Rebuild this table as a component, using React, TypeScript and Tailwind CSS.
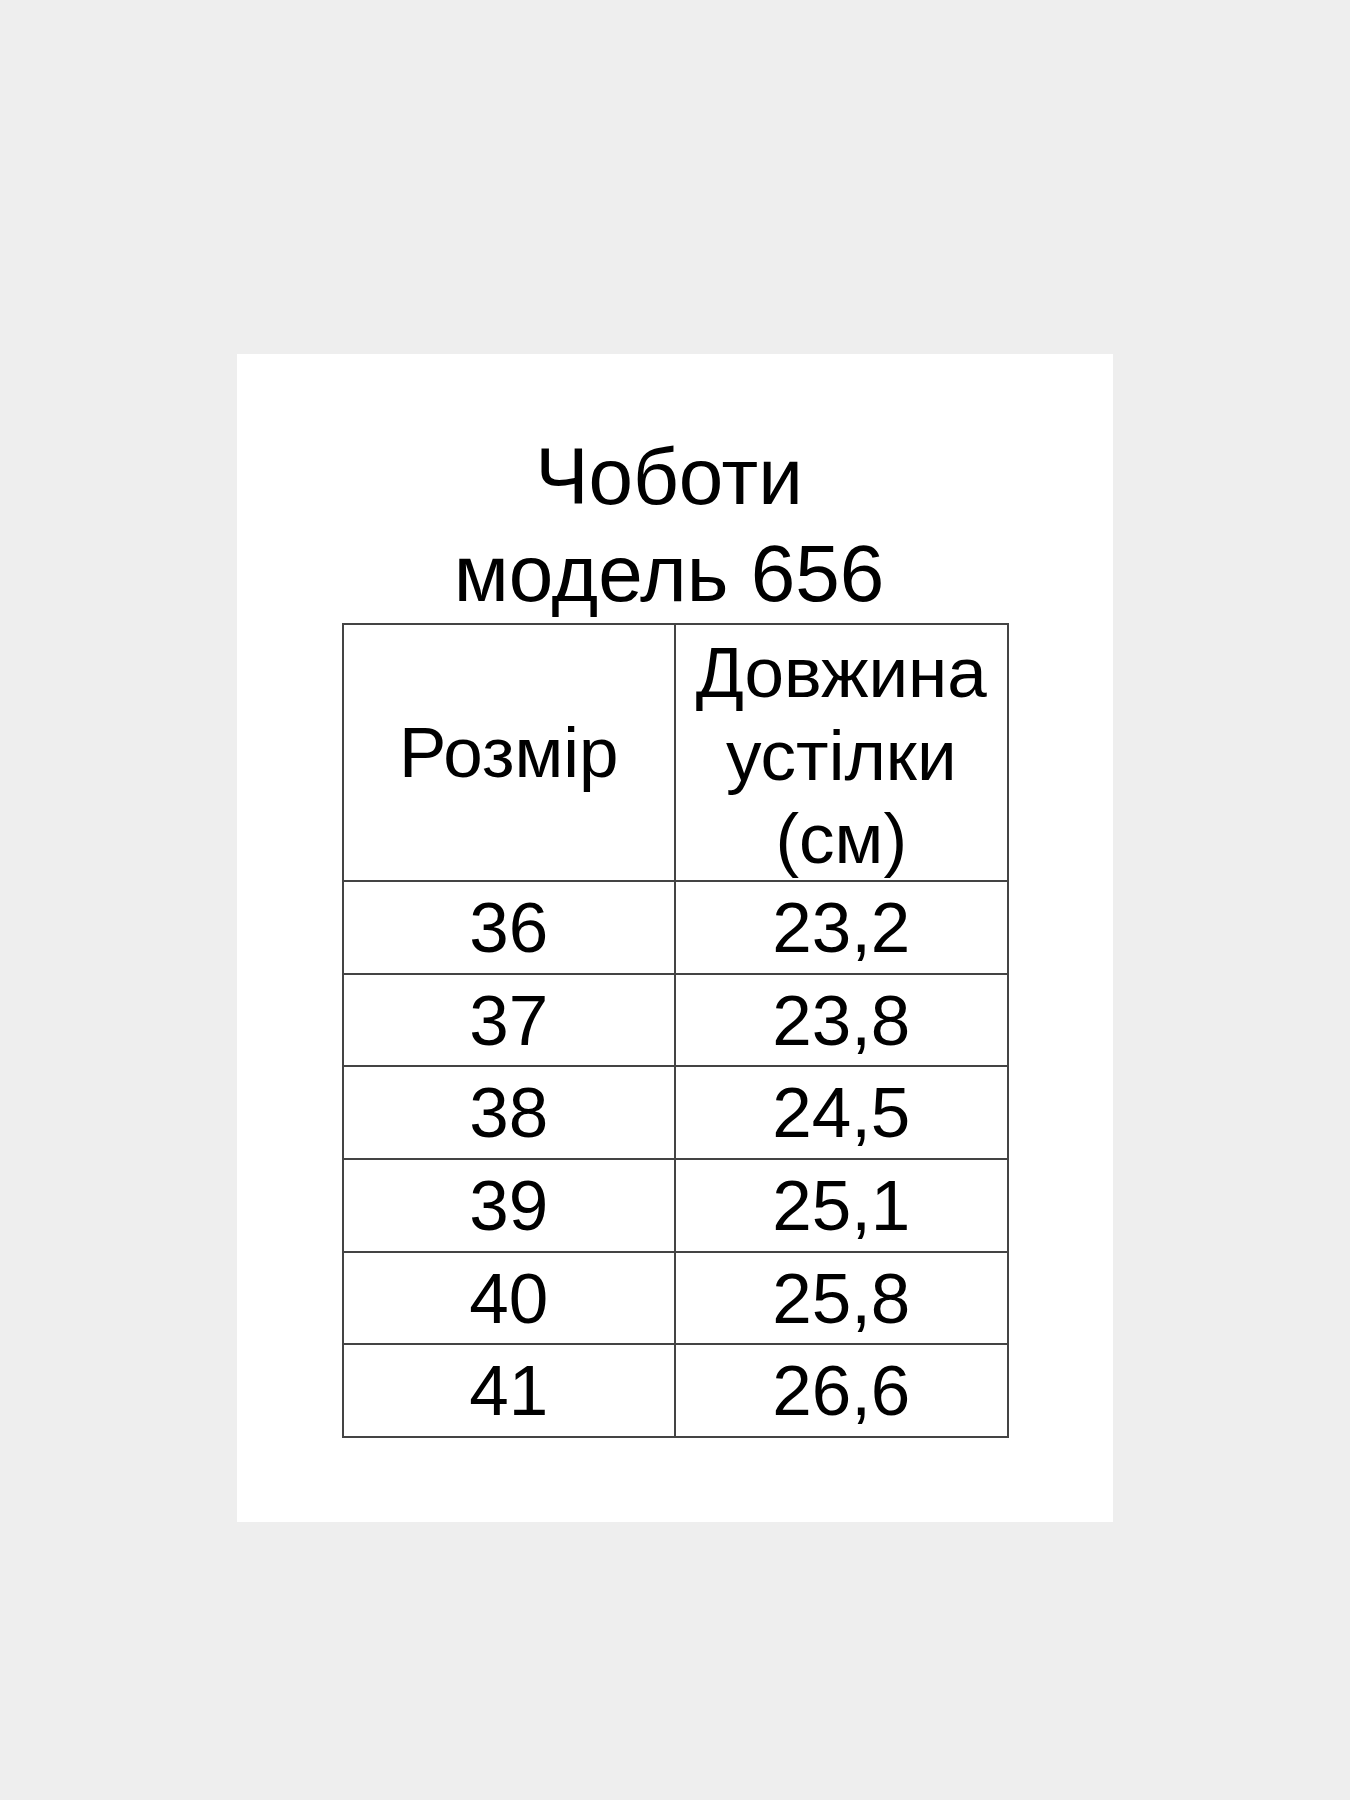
export default function App() {
  const rows = [
    ['36', '23,2'],
    ['37', '23,8'],
    ['38', '24,5'],
    ['39', '25,1'],
    ['40', '25,8'],
    ['41', '26,6'],
  ]

  return (
    <div
      className="min-h-[1800px] bg-[#eeeeee] pt-[354px] text-black"
      style={{ fontFamily: '"Liberation Sans", Arial, sans-serif' }}
    >
      <div className="mx-auto flex h-[1168px] w-[876px] flex-col items-center bg-white pt-[74px]">
        <h1 className="pr-[12px] text-center text-[80px] font-normal leading-[97px]">
          Чоботи
          <br />
          модель 656
        </h1>

        <div className="mt-px grid w-[667px] grid-cols-2 border-l-2 border-t-2 border-[#444]">
          {/* header */}
          <div className="flex h-[257px] items-center justify-center border-b-2 border-r-2 border-[#444] text-[71px] leading-[83px]">
            Розмір
          </div>
          <div className="h-[257px] border-b-2 border-r-2 border-[#444] pt-[6px] text-center text-[71px] leading-[83px]">
            Довжина
            <br />
            устілки
            <br />
            (см)
          </div>

          {rows.map(([size, length]) => (
            <>
              <div
                key={`s-${size}`}
                className="flex h-[92.7px] items-center justify-center border-b-2 border-r-2 border-[#444] text-[71px] leading-none"
              >
                {size}
              </div>
              <div
                key={`l-${size}`}
                className="flex h-[92.7px] items-center justify-center border-b-2 border-r-2 border-[#444] text-[71px] leading-none"
              >
                {length}
              </div>
            </>
          ))}
        </div>
      </div>
    </div>
  )
}
